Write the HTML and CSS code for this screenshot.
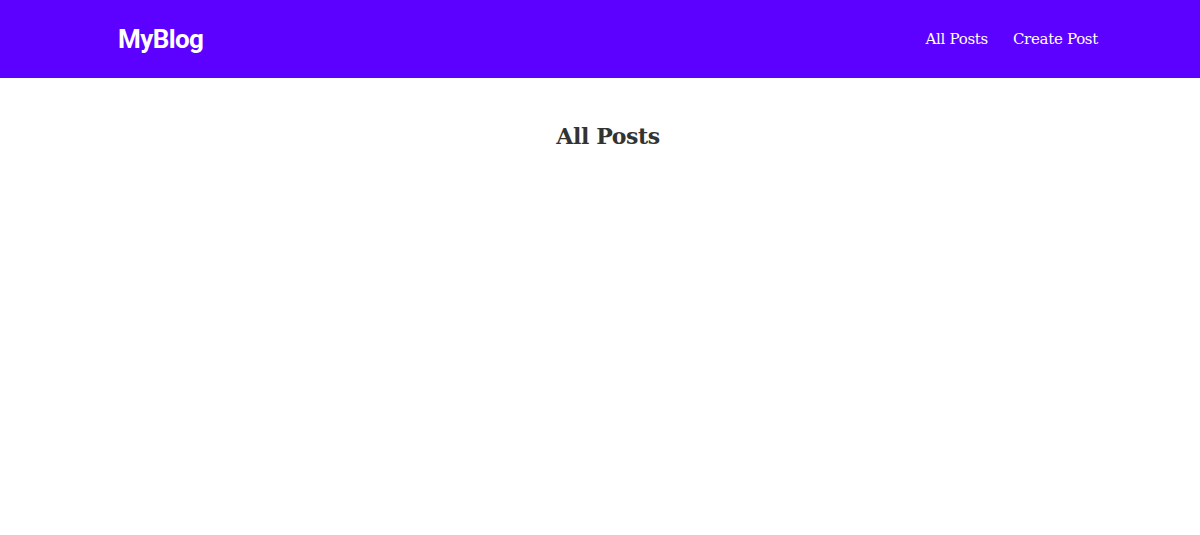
FILE: index.html
```html
<!DOCTYPE html>
<html>
<head>
<meta charset="utf-8">
<link rel="stylesheet" href="styles.css">
</head>
<body>
<header class="navbar">
  <div class="nav-inner">
    <a class="logo" href="#">MyBlog</a>
    <nav class="nav-links">
      <a href="#">All Posts</a>
      <a href="#">Create Post</a>
    </nav>
  </div>
</header>
<main class="content">
  <h1 class="page-title">All Posts</h1>
</main>
</body>
</html>
```
FILE: styles.css
```css
html, body {
  margin: 0;
  padding: 0;
  background: #fff;
}
body {
  font-family: "Roboto Slab", "DejaVu Serif", serif;
  color: #333;
}
.navbar {
  background: #5c00ff;
  height: 78px;
}
.nav-inner {
  height: 100%;
  display: flex;
  align-items: center;
  justify-content: space-between;
  padding: 0 102px 0 118px;
}
.logo {
  font-family: Roboto, "Liberation Sans", sans-serif;
  font-weight: 700;
  font-size: 26px;
  color: #fff;
  text-decoration: none;
  letter-spacing: -0.6px;
}
.nav-links {
  display: flex;
  gap: 25px;
}
.nav-links a {
  color: #fff;
  text-decoration: none;
  font-size: 15px;
  letter-spacing: -0.3px;
}
.content {
  padding: 45px 0 0 16px;
}
.page-title {
  margin: 0;
  text-align: center;
  font-size: 22px;
  font-weight: 700;
  color: #333;
  letter-spacing: -0.4px;
}
```
